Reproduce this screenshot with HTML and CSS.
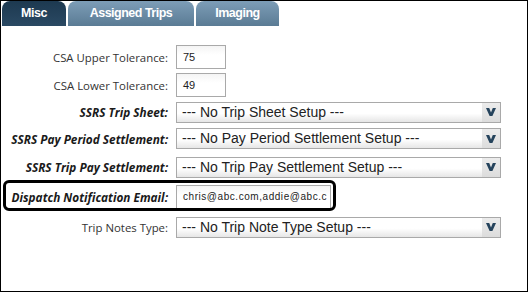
FILE: index.html
```html
<!DOCTYPE html>
<html>
	<head>
		<meta charset="UTF-8">
		<title>Misc</title>
		<link rel="stylesheet" href="styles.css">
	</head>
	<body>
		<div class="marco">
			<ul class="pestanas">
				<li class="activa">Misc</li>
				<li>Assigned Trips</li>
				<li>Imaging</li>
			</ul>

			<div class="formulario">
				<label class="etiqueta">CSA Upper Tolerance:</label>
				<div class="caja corta">75</div>

				<label class="etiqueta">CSA Lower Tolerance:</label>
				<div class="caja corta">49</div>

				<label class="etiqueta fuerte">SSRS Trip Sheet:</label>
				<div class="lista"><span class="texto">--- No Trip Sheet Setup ---</span><span class="flecha"><svg width="10" height="8" viewBox="0 0 10 8"><polygon points="0,0 3.2,0 5,4.4 6.8,0 10,0 6.4,8 3.6,8" fill="#25435c"/></svg></span></div>

				<label class="etiqueta fuerte">SSRS Pay Period Settlement:</label>
				<div class="lista"><span class="texto">--- No Pay Period Settlement Setup ---</span><span class="flecha"><svg width="10" height="8" viewBox="0 0 10 8"><polygon points="0,0 3.2,0 5,4.4 6.8,0 10,0 6.4,8 3.6,8" fill="#25435c"/></svg></span></div>

				<label class="etiqueta fuerte">SSRS Trip Pay Settlement:</label>
				<div class="lista"><span class="texto">--- No Trip Pay Settlement Setup ---</span><span class="flecha"><svg width="10" height="8" viewBox="0 0 10 8"><polygon points="0,0 3.2,0 5,4.4 6.8,0 10,0 6.4,8 3.6,8" fill="#25435c"/></svg></span></div>

				<label class="etiqueta fuerte">Dispatch Notification Email:</label>
				<div class="caja correo">chris@abc.com,addie@abc.c</div>

				<label class="etiqueta">Trip Notes Type:</label>
				<div class="lista"><span class="texto">--- No Trip Note Type Setup ---</span><span class="flecha"><svg width="10" height="8" viewBox="0 0 10 8"><polygon points="0,0 3.2,0 5,4.4 6.8,0 10,0 6.4,8 3.6,8" fill="#25435c"/></svg></span></div>
			</div>

			<div class="resaltado"></div>
		</div>
	</body>
</html>
```

FILE: styles.css
```css
body {
	margin: 0;
	font-family: "Open Sans", "Noto Sans", sans-serif;
	background: #fff;
}
.marco {
	position: relative;
	box-sizing: border-box;
	width: 528px;
	height: 292px;
	border: 1px solid #000;
	overflow: hidden;
}
ul.pestanas {
	display: flex;
	gap: 2px;
	margin: 0;
	padding: 0 0 0 1px;
	list-style-type: none;
}
ul.pestanas li {
	box-sizing: border-box;
	height: 25px;
	line-height: 25px;
	border-radius: 8px 8px 0 0;
	background: linear-gradient(#7d9db7, #5a7b94);
	color: #fff;
	font-family: "Liberation Sans", Arial, sans-serif;
	font-size: 12.5px;
	letter-spacing: -0.5px;
	font-weight: bold;
	text-align: center;
	width: 126px;
}
ul.pestanas li.activa {
	background: linear-gradient(#1d3950, #2a4963);
	width: 64px;
}
ul.pestanas li:last-child {
	width: 83px;
}
div.formulario {
	display: grid;
	grid-template-columns: 167px auto;
	grid-template-rows: 28px 28px 26px 27px 30px 29px 32px;
	column-gap: 8px;
	align-items: center;
	margin-top: 17px;
}
label.etiqueta {
	text-align: right;
	font-size: 11.4px;
	color: #333;
	white-space: nowrap;
}
label.fuerte {
	font-size: 11.8px;
	font-weight: bold;
	font-style: italic;
	color: #1a1a1a;
}
div.caja {
	box-sizing: border-box;
	height: 24px;
	line-height: 22px;
	padding-left: 6px;
	border: 1px solid #a9a9a9;
	background: linear-gradient(#f4f4f4, #fff 40%);
	font-family: "Liberation Sans", Arial, sans-serif;
	font-size: 10px;
	color: #222;
	white-space: nowrap;
}
div.corta {
	width: 50px;
	font-size: 11px;
}
div.correo {
	width: 155px;
	letter-spacing: 0.55px;
}
div.lista {
	box-sizing: border-box;
	display: flex;
	width: 325px;
	height: 21px;
	border: 1px solid #a9a9a9;
	background: linear-gradient(#fff 55%, #e6e6e6);
	font-family: "Liberation Sans", Arial, sans-serif;
	font-size: 14px;
	color: #222;
}
div.lista span.texto {
	flex: 1;
	line-height: 19px;
	padding-left: 5px;
	white-space: nowrap;
}
div.lista span.flecha {
	display: flex;
	align-items: center;
	justify-content: center;
	width: 18px;
	background: linear-gradient(#ececec, #dcdcdc);
}
div.resaltado {
	position: absolute;
	left: 2px;
	top: 179px;
	width: 333px;
	height: 31px;
	box-sizing: border-box;
	border: 3px solid #000;
	border-radius: 6px;
}
```
